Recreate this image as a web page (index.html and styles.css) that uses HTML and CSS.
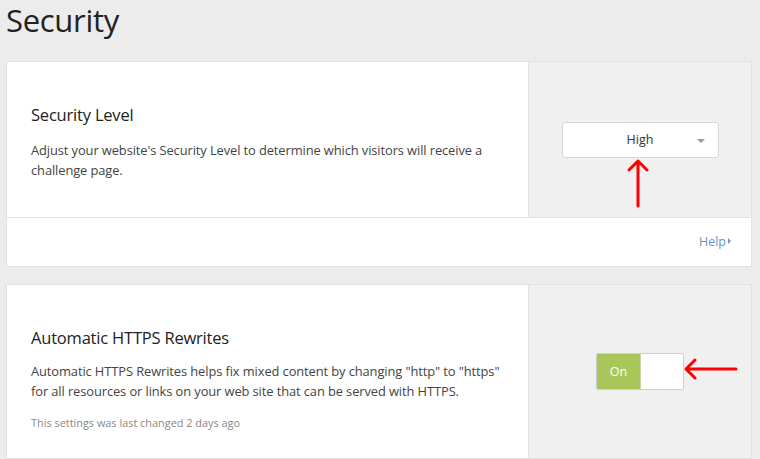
FILE: index.html
```html
<!DOCTYPE html>
<html lang="en">
<head>
  <meta charset="UTF-8">
  <title>Security</title>
  <link rel="stylesheet" href="styles.css">
</head>
<body>
  <h1 class="page-title">Security</h1>

  <div class="card">
    <div class="card-row first">
      <div class="card-info">
        <h3>Security Level</h3>
        <p>Adjust your website's Security Level to determine which visitors will receive a challenge page.</p>
      </div>
      <div class="card-control">
        <div class="select">
          <span>High</span>
          <i class="caret"></i>
        </div>
        <svg class="mark up" width="24" height="50" viewBox="0 0 24 50">
          <path d="M12 3 V48 M3 12 L12 3 L21 12" fill="none" stroke="#f00" stroke-width="3" stroke-linecap="round" stroke-linejoin="round"/>
        </svg>
      </div>
    </div>
    <div class="card-foot">
      <a class="help" href="#">Help<i class="tri"></i></a>
    </div>
  </div>

  <div class="card">
    <div class="card-row second">
      <div class="card-info">
        <h3>Automatic HTTPS Rewrites</h3>
        <p>Automatic HTTPS Rewrites helps fix mixed content by changing "http" to "https" for all resources or links on your web site that can be served with HTTPS.</p>
        <small>This settings was last changed 2 days ago</small>
      </div>
      <div class="card-control">
        <div class="toggle">
          <span class="on">On</span>
          <span class="off"></span>
        </div>
        <svg class="mark left" width="56" height="24" viewBox="0 0 56 24">
          <path d="M3 12 H53 M12 3 L3 12 L12 21" fill="none" stroke="#f00" stroke-width="3" stroke-linecap="round" stroke-linejoin="round"/>
        </svg>
      </div>
    </div>
  </div>
</body>
</html>
```

FILE: styles.css
```css
* {
  margin: 0;
  padding: 0;
  box-sizing: border-box;
}

body {
  background-color: #ececec;
  font-family: "Open Sans", "Noto Sans", sans-serif;
  color: #333;
  overflow: hidden;
}

.page-title {
  font-weight: 400;
  font-size: 31px;
  line-height: 40px;
  color: #222;
  padding: 0 6px;
  height: 61px;
  letter-spacing: -0.3px;
}

.card {
  margin: 0 8px 17px 6px;
  background: #fff;
  border: 1px solid #e2e2e2;
}

.card-row {
  display: flex;
}

.card-row.first {
  height: 155px;
}

.card-row.second {
  height: 173px;
}

.card-info {
  flex: 0 0 522px;
  padding: 0 24px;
  border-right: 1px solid #e2e2e2;
}

.first .card-info {
  padding-top: 40px;
}

.second .card-info {
  padding-top: 40px;
}

.card-info h3 {
  font-weight: 400;
  font-size: 16.5px;
  line-height: 26px;
  color: #222;
  margin-bottom: 12px;
  letter-spacing: -0.2px;
}

.second .card-info h3 {
  margin-bottom: 10px;
}

.card-info p {
  font-size: 12.9px;
  line-height: 20px;
  color: #444;
  letter-spacing: -0.1px;
}

.card-info small {
  display: block;
  margin-top: 14px;
  font-size: 10.9px;
  color: #888;
}

.card-control {
  flex: 1;
  background: #f0f0f0;
  display: flex;
  align-items: center;
  justify-content: center;
  position: relative;
}

.select {
  width: 157px;
  height: 36px;
  background: #fff;
  border: 1px solid #d6d6d6;
  border-radius: 3px;
  display: flex;
  align-items: center;
  justify-content: center;
  position: relative;
  font-size: 12.5px;
  color: #333;
}

.caret {
  position: absolute;
  right: 13px;
  top: 16px;
  width: 0;
  height: 0;
  border-left: 4.5px solid transparent;
  border-right: 4.5px solid transparent;
  border-top: 4.5px solid #999;
}

.toggle {
  display: flex;
  width: 88px;
  height: 37px;
  border: 1px solid #cfcfcf;
  border-radius: 2px;
  overflow: hidden;
}

.toggle .on {
  width: 44px;
  background: #a8c65a;
  color: #fff;
  font-size: 12.5px;
  display: flex;
  align-items: center;
  justify-content: center;
  border-right: 1px solid #c8d4a8;
}

.toggle .off {
  flex: 1;
  background: #fff;
}

.mark {
  position: absolute;
}

.mark.up {
  left: 97px;
  top: 96px;
}

.mark.left {
  left: 154px;
  top: 72px;
}

.card-foot {
  height: 49px;
  border-top: 1px solid #e2e2e2;
  display: flex;
  align-items: center;
  justify-content: flex-end;
  padding: 0 20px 2px 0;
}

.help {
  color: #6f93c6;
  font-size: 12.5px;
  text-decoration: none;
  display: flex;
  align-items: center;
}

.tri {
  margin-left: 2px;
  width: 0;
  height: 0;
  border-top: 3px solid transparent;
  border-bottom: 3px solid transparent;
  border-left: 3.5px solid #6f93c6;
}
```
